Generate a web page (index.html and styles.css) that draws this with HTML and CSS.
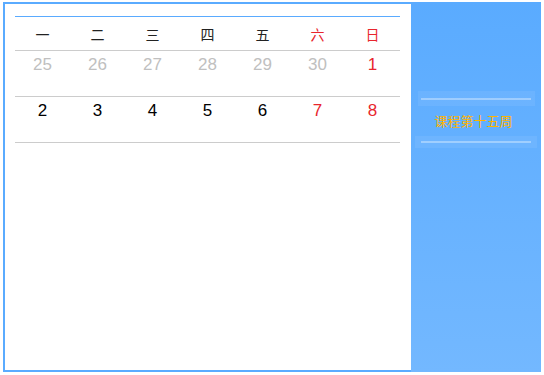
FILE: index.html
```html
<!DOCTYPE html>
<html>
<head>
<meta charset="utf-8">
<link rel="stylesheet" href="styles.css">
</head>
<body>
<div class="frame">
  <div class="main">
    <div class="calendar">
      <div class="row head">
        <div class="cell">一</div>
        <div class="cell">二</div>
        <div class="cell">三</div>
        <div class="cell">四</div>
        <div class="cell">五</div>
        <div class="cell red">六</div>
        <div class="cell red">日</div>
      </div>
      <div class="row days">
        <div class="cell gray">25</div>
        <div class="cell gray">26</div>
        <div class="cell gray">27</div>
        <div class="cell gray">28</div>
        <div class="cell gray">29</div>
        <div class="cell gray">30</div>
        <div class="cell red">1</div>
      </div>
      <div class="row days">
        <div class="cell">2</div>
        <div class="cell">3</div>
        <div class="cell">4</div>
        <div class="cell">5</div>
        <div class="cell">6</div>
        <div class="cell red">7</div>
        <div class="cell red">8</div>
      </div>
    </div>
  </div>
  <div class="side">
    <div class="bar bar-top"><span class="line"></span></div>
    <div class="week-label">课程第十五周</div>
    <div class="bar bar-bottom"><span class="line"></span></div>
  </div>
</div>
</body>
</html>
```
FILE: styles.css
```css
html, body {
  margin: 0;
  padding: 0;
  background: #ffffff;
}
body {
  padding: 2px 3px 3px 3px;
  font-family: "Liberation Sans", "Noto Sans CJK SC", sans-serif;
}
.frame {
  display: flex;
  width: 538px;
  height: 370px;
}
.main {
  width: 408px;
  flex: none;
  border-left: 2px solid #5aabff;
  border-top: 2px solid #5aabff;
  border-bottom: 2px solid #5aabff;
  padding: 12px 11px 0 10px;
  box-sizing: border-box;
}
.calendar {
  width: 385px;
  border-top: 1px solid #5aabff;
}
.row {
  display: grid;
  grid-template-columns: repeat(7, 55px);
  border-bottom: 1px solid #cccccc;
}
.head {
  height: 33px;
  align-items: center;
  font-family: "Noto Sans CJK SC", sans-serif;
  font-size: 14px;
  color: #222222;
}
.days {
  height: 45px;
  align-items: start;
  font-size: 17px;
  color: #000000;
}
.days .cell {
  padding-top: 4px;
}
.cell {
  text-align: center;
}
.gray { color: #c0c0c0; }
.red { color: #e8262d; }
.side {
  width: 130px;
  flex: none;
  height: 370px;
  background: linear-gradient(to bottom, #5aabff 0%, #73b8ff 100%);
  display: flex;
  flex-direction: column;
  align-items: center;
}
.bar {
  display: flex;
  align-items: center;
  justify-content: center;
  background: rgba(255, 255, 255, 0.07);
}
.bar-top {
  margin-top: 89px;
  width: 117px;
  height: 15px;
}
.bar-bottom {
  width: 122px;
  height: 12px;
}
.line {
  display: block;
  width: 110px;
  height: 2px;
  background: rgba(255, 255, 255, 0.35);
}
.week-label {
  height: 30px;
  line-height: 30px;
  font-family: "Noto Sans CJK SC", sans-serif;
  font-size: 13px;
  color: #ffb400;
  margin-right: 5px;
}
```
